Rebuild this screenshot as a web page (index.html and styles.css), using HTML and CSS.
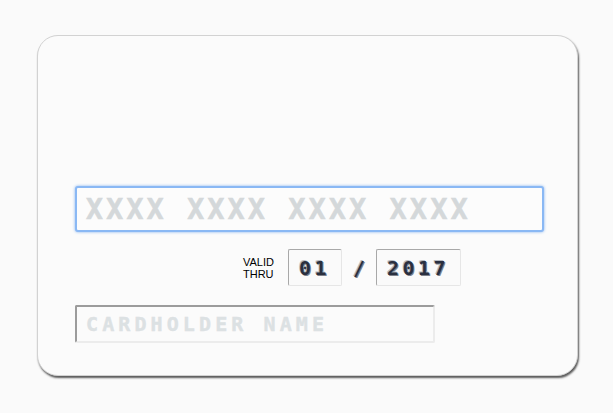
FILE: index.html
```html
<!DOCTYPE html>
<html>
<head>
<meta charset="utf-8">
<link rel="stylesheet" href="styles.css">
</head>
<body>
<div class="card">
  <div class="number-field"><span class="placeholder">XXXX XXXX XXXX XXXX</span></div>
  <div class="expiry-row">
    <div class="valid-label">VALID<br>THRU</div>
    <div class="exp-box month"><span class="emboss">01</span></div>
    <div class="slash emboss">/</div>
    <div class="exp-box year"><span class="emboss">2017</span></div>
  </div>
  <div class="name-field"><span class="name-placeholder">CARDHOLDER NAME</span></div>
</div>
</body>
</html>
```
FILE: styles.css
```css
html, body {
  margin: 0;
  padding: 0;
  background: #fafafa;
}
body {
  width: 613px;
  height: 413px;
  overflow: hidden;
}
.card {
  box-sizing: border-box;
  margin: 35px 0 0 37px;
  width: 541px;
  height: 341px;
  border-radius: 21px;
  border: 1px solid #d2d2d2;
  box-shadow: 1px 2px 2px #5a5a5a;
  background: #fbfbfb;
  padding: 150px 0 0 37px;
  display: flex;
  flex-direction: column;
}
.number-field {
  box-sizing: border-box;
  width: 469px;
  height: 46px;
  border: 2px solid #8ab8f4;
  border-radius: 3px;
  box-shadow: 0 0 3px #7fb0f0;
  background: #fcfcfc;
  display: flex;
  align-items: center;
  padding-left: 9px;
}
.placeholder {
  font-family: "DejaVu Sans Mono", monospace;
  font-weight: bold;
  font-size: 28px;
  letter-spacing: 3.4px;
  color: #d4d8da;
  white-space: pre;
  -webkit-text-stroke: 0.6px #d4d8da;
}
.expiry-row {
  display: flex;
  align-items: center;
  margin-top: 17px;
  margin-left: 168px;
  height: 37px;
}
.valid-label {
  font-family: "Liberation Sans", Arial, sans-serif;
  font-size: 11px;
  line-height: 12px;
  color: #000;
  width: 45px;
}
.exp-box {
  box-sizing: border-box;
  height: 37px;
  border: 1px solid #e6e6e6;
  border-top-color: #a8a8a8;
  border-left-color: #a8a8a8;
  border-radius: 2px;
  background: #fafafa;
  display: flex;
  align-items: center;
  padding-left: 10px;
}
.month { width: 54px; }
.year { width: 85px; }
.emboss {
  font-family: "DejaVu Sans Mono", monospace;
  font-weight: bold;
  font-size: 20px;
  letter-spacing: 3.5px;
  color: #2a3040;
  text-shadow: -1px -1px 0 #b8bcc2, 1px 1px 0 #7c808a;
}
.slash {
  width: 34px;
  text-align: center;
  letter-spacing: 0;
}
.name-field {
  box-sizing: border-box;
  margin-top: 19px;
  width: 360px;
  height: 38px;
  border: 2px solid #ececec;
  border-top-color: #9c9c9c;
  border-left-color: #9c9c9c;
  border-radius: 2px;
  background: #fbfbfb;
  display: flex;
  align-items: center;
  padding-left: 9px;
}
.name-placeholder {
  font-family: "DejaVu Sans Mono", monospace;
  font-weight: bold;
  font-size: 20px;
  letter-spacing: 4.1px;
  color: #dce1e3;
  white-space: pre;
  -webkit-text-stroke: 0.4px #dce1e3;
}
```
